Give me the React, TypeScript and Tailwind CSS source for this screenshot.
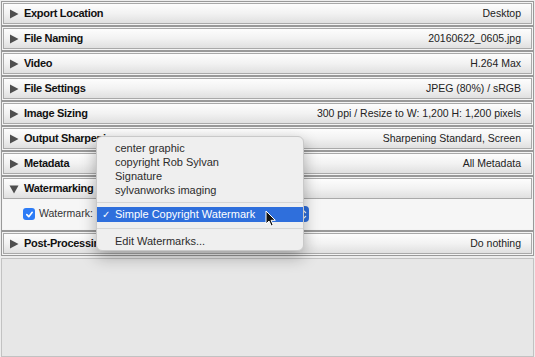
import React from "react";

const rows: { title: string; value: string }[] = [
  { title: "Export Location", value: "Desktop" },
  { title: "File Naming", value: "20160622_0605.jpg" },
  { title: "Video", value: "H.264 Max" },
  { title: "File Settings", value: "JPEG (80%) / sRGB" },
  { title: "Image Sizing", value: "300 ppi / Resize to W: 1,200 H: 1,200 pixels" },
  { title: "Output Sharpening", value: "Sharpening Standard, Screen" },
  { title: "Metadata", value: "All Metadata" },
];

function Tri({ open }: { open?: boolean }) {
  return open ? (
    <svg width="10" height="10" viewBox="0 0 10 10" className="shrink-0">
      <polygon points="0.5,1.5 9.5,1.5 5,9.5" fill="#4f4f4f" />
    </svg>
  ) : (
    <svg width="10" height="10" viewBox="0 0 10 10" className="shrink-0">
      <polygon points="1,0.5 9.5,5 1,9.5" fill="#4f4f4f" />
    </svg>
  );
}

function Header({ title, value, open }: { title: string; value?: string; open?: boolean }) {
  return (
    <div className="h-[21px] border border-[#a9a9a9] bg-gradient-to-b from-[#fdfdfd] via-[#f2f2f2] to-[#e0e0e0] flex items-center pl-[5px] pr-[10px]">
      <Tri open={open} />
      <span className="ml-[5px] text-[11px] font-bold tracking-[-0.3px] text-[#111] leading-none">{title}</span>
      <span className="ml-auto text-[10.5px] text-[#222] leading-none">{value}</span>
    </div>
  );
}

function Section({ children }: { children: React.ReactNode }) {
  return <div className="mx-px border border-[#999] bg-[#f4f4f4] p-px">{children}</div>;
}

export default function App() {
  return (
    <div
      className="relative w-[535px] h-[357px] overflow-hidden bg-[#ededed] flex flex-col pt-px"
      style={{ fontFamily: '"Liberation Sans", Arial, sans-serif' }}
    >
      {rows.map((r) => (
        <Section key={r.title}>
          <Header title={r.title} value={r.value} />
        </Section>
      ))}
      <Section>
        <Header title="Watermarking" open />
        <div className="h-[30px] flex items-center pl-[20px] bg-[#f6f6f6]">
          <div className="w-[12px] h-[12px] rounded-[3px] bg-[#2d7cf6] flex items-center justify-center">
            <svg width="9" height="9" viewBox="0 0 10 10">
              <path d="M2 5.2 L4.2 7.4 L8 2.6" stroke="white" strokeWidth="1.8" fill="none" strokeLinecap="round" strokeLinejoin="round" />
            </svg>
          </div>
          <span className="ml-[4px] text-[10.5px] text-[#333]">Watermark:</span>
          <div className="ml-[4px] w-[212px] h-[16px] rounded-[4px] bg-[#2f6fdc] flex items-center justify-end pr-[2px]">
            <svg width="7" height="11" viewBox="0 0 7 11">
              <path d="M1 4 L3.5 1.5 L6 4 M1 7 L3.5 9.5 L6 7" stroke="white" strokeWidth="1.1" fill="none" />
            </svg>
          </div>
        </div>
      </Section>
      <Section>
        <Header title="Post-Processing" value="Do nothing" />
      </Section>
      <div className="mt-[2px] mx-px flex-1 border border-[#c2c2c2] bg-[#e7e7e7]" />

      {/* popup menu */}
      <div className="absolute left-[96px] top-[136px] w-[208px] h-[115px] rounded-[6px] bg-[#efefef] border border-[#c9c9c9] shadow-[0_6px_16px_rgba(0,0,0,0.3)] pt-[4px] flex flex-col text-[11px] text-[#2c2c2c]">
        {["center graphic", "copyright Rob Sylvan", "Signature", "sylvanworks imaging"].map((t) => (
          <div key={t} className="h-[14px] flex items-center pl-[18px] leading-none">
            {t}
          </div>
        ))}
        <div className="h-[10px] flex items-center">
          <div className="w-full h-px bg-[#d6d6d6]" />
        </div>
        <div className="h-[15px] bg-[#2f6fdc] text-white flex items-center leading-none">
          <span className="w-[18px] pl-[5px] text-[10px]">✓</span>
          <span>Simple Copyright Watermark</span>
        </div>
        <div className="h-[12px] flex items-center">
          <div className="w-full h-px bg-[#d6d6d6]" />
        </div>
        <div className="h-[14px] flex items-center pl-[18px] leading-none">Edit Watermarks...</div>
      </div>

      {/* cursor */}
      <svg className="absolute left-[265px] top-[210px]" width="12" height="18" viewBox="0 0 12 18">
        <path d="M1 1 L1 14 L4 11 L6.2 16 L8.2 15.1 L6.1 10.3 L10.3 10.3 Z" fill="#111" stroke="white" strokeWidth="1" strokeLinejoin="round" />
      </svg>
    </div>
  );
}
